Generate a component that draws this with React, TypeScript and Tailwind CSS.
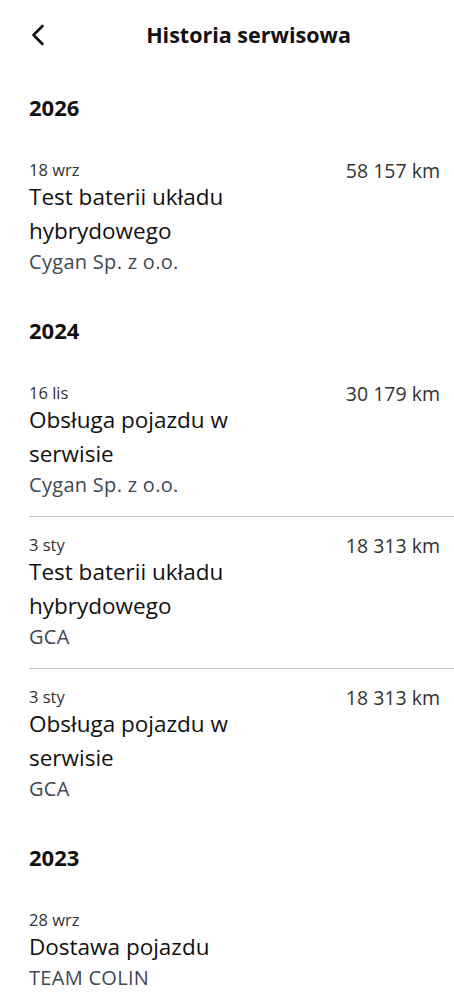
type Entry = { date: string; km: string; title: string; shop: string }

const SECTIONS: { year: string; entries: Entry[] }[] = [
  {
    year: '2026',
    entries: [
      { date: '18 wrz', km: '58 157 km', title: 'Test baterii układu hybrydowego', shop: 'Cygan Sp. z o.o.' },
    ],
  },
  {
    year: '2024',
    entries: [
      { date: '16 lis', km: '30 179 km', title: 'Obsługa pojazdu w serwisie', shop: 'Cygan Sp. z o.o.' },
      { date: '3 sty', km: '18 313 km', title: 'Test baterii układu hybrydowego', shop: 'GCA' },
      { date: '3 sty', km: '18 313 km', title: 'Obsługa pojazdu w serwisie', shop: 'GCA' },
    ],
  },
  {
    year: '2023',
    entries: [{ date: '28 wrz', km: '', title: 'Dostawa pojazdu', shop: 'TEAM COLIN' }],
  },
]

function EntryRow({ entry, last }: { entry: Entry; last: boolean }) {
  return (
    <div className={`flex justify-between pr-[14px] pt-[18px] pb-[17px] ${last ? '' : 'border-b border-[#c4c4c4]'}`}>
      <div className="w-[235px]">
        <p className="text-[16.5px] leading-[20px] text-[#333]">{entry.date}</p>
        <p className="text-[22.5px] leading-[34px] text-[#111]">{entry.title}</p>
        <p className="text-[20px] leading-[28px] tracking-[0.3px] text-[#404756]">{entry.shop}</p>
      </div>
      {entry.km && <p className="text-[19.5px] leading-[22px] text-[#333] whitespace-nowrap">{entry.km}</p>}
    </div>
  )
}

export default function App() {
  return (
    <div className="min-h-screen bg-white" style={{ fontFamily: '"Open Sans", sans-serif' }}>
      <header className="h-[70px] flex items-center pl-[31px] pr-[26px]">
        <button type="button" className="text-[#111]">
          <svg width="14" height="22" viewBox="0 0 14 22" fill="none">
            <path d="M11.5 2 L2.5 11 L11.5 20" stroke="currentColor" strokeWidth="2.6" strokeLinecap="round" strokeLinejoin="round" />
          </svg>
        </button>
        <h1 className="flex-1 text-center pl-[46px] text-[21.5px] font-bold text-[#111]">Historia serwisowa</h1>
        <div className="w-[22px]" />
      </header>

      <div className="pl-[29px] pt-[22px]">
        {SECTIONS.map((section) => (
          <section key={section.year} className="mb-[22px]">
            <h2 className="text-[22px] leading-[30px] font-bold text-[#111] mb-[20px]">{section.year}</h2>
            {section.entries.map((e, i) => (
              <EntryRow key={i} entry={e} last={i === section.entries.length - 1} />
            ))}
          </section>
        ))}
      </div>
    </div>
  )
}
